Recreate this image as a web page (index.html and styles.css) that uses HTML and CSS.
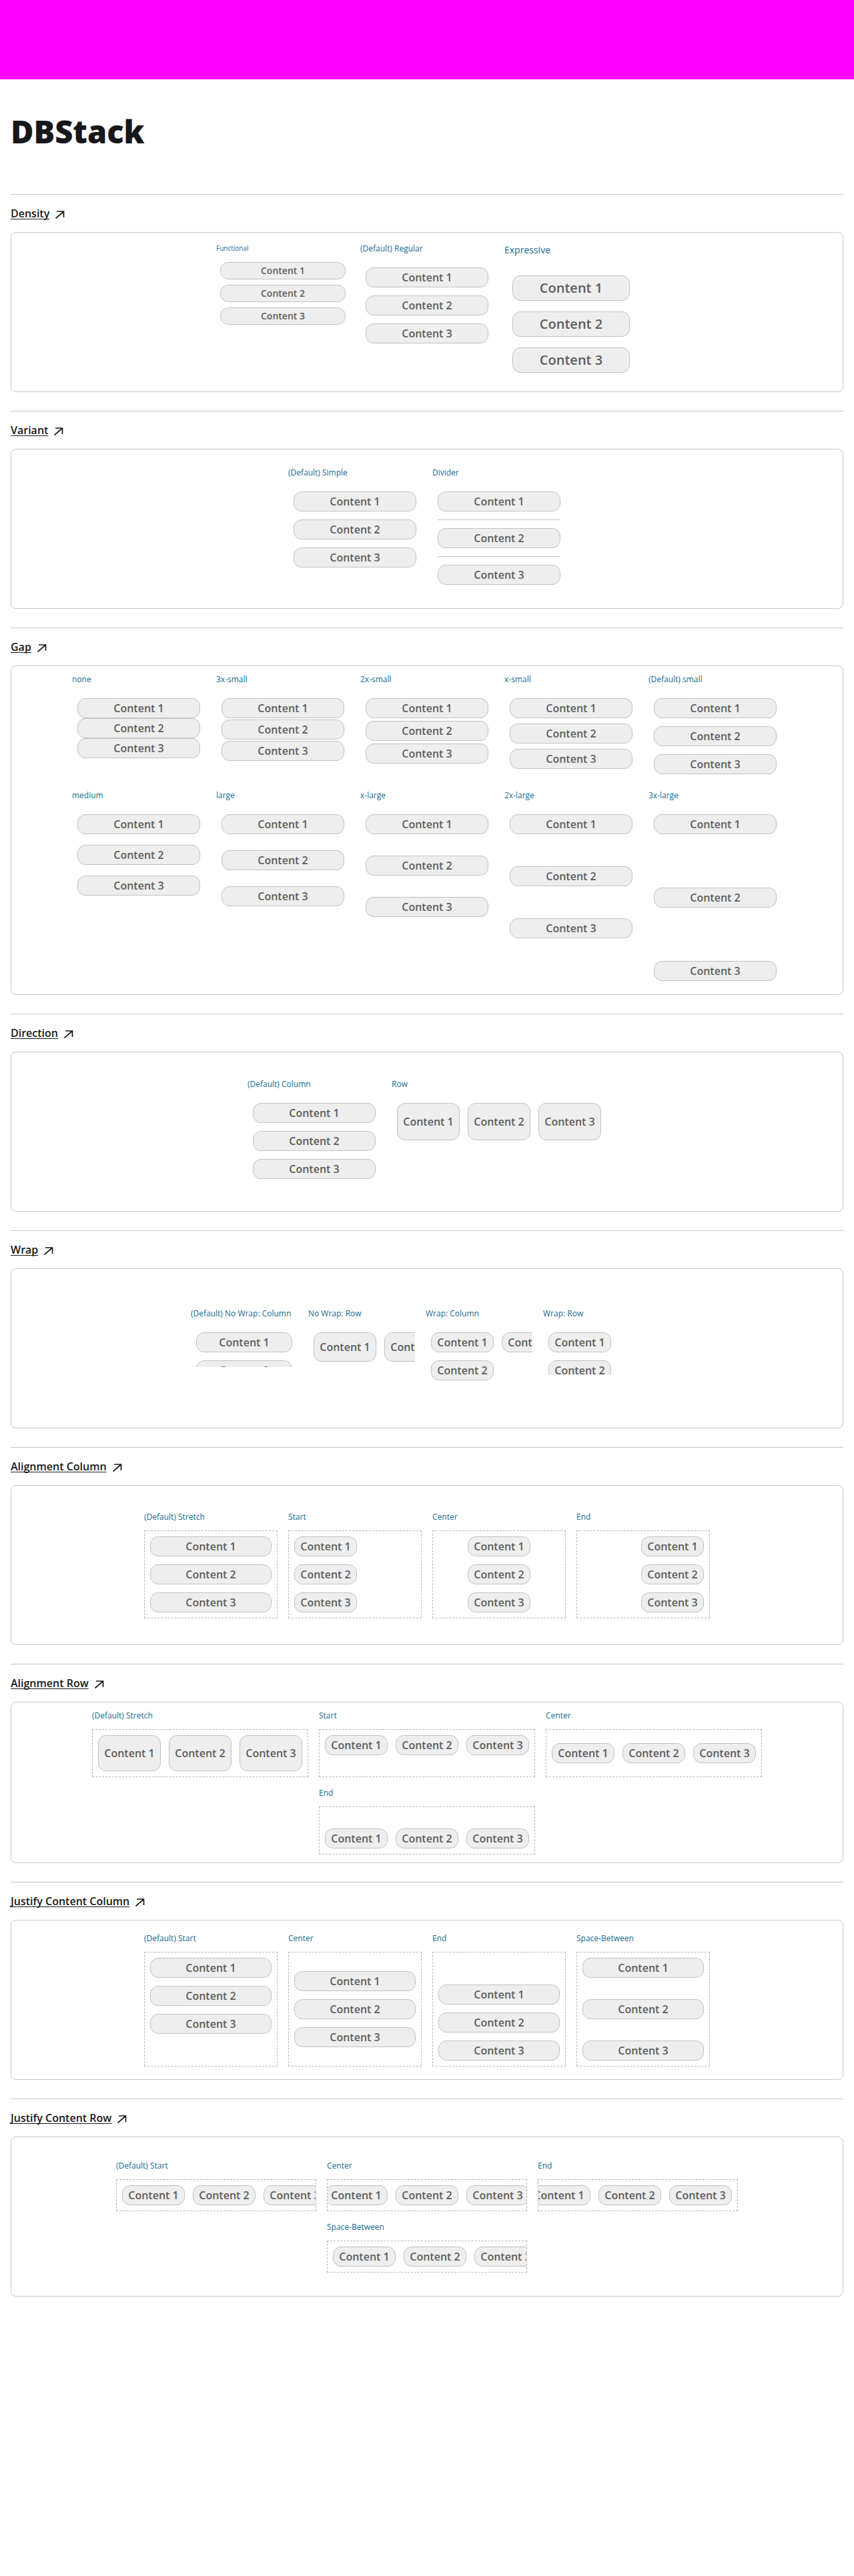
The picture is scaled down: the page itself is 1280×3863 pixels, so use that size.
FILE: index.html
```
<!DOCTYPE html>
<html lang="en">
<head>
<meta charset="utf-8">
<meta name="viewport" content="width=device-width, initial-scale=1">
<title>DBStack</title>
<link rel="stylesheet" href="styles.css">
</head>
<body>
<svg class="sprite" aria-hidden="true">
  <symbol id="arrow" viewBox="0 0 16 16">
    <path d="M3 5h10.500v9M1.500 15.500l12-10.500" fill="none" stroke="currentColor" stroke-width="1.700"/>
  </symbol>
</svg>
<div class="banner"></div>
<main class="page">
  <h1 class="title">DBStack</h1>

  <section class="section">
    <h2 class="heading"><a class="link" href="#density"><span class="link-text">Density</span><svg class="icon" aria-hidden="true"><use href="#arrow"/></svg></a></h2>
    <div class="card" id="density">
      <div class="cell functional"><span class="label">Functional</span><div class="stack"><div class="pill">Content 1</div><div class="pill">Content 2</div><div class="pill">Content 3</div></div></div>
      <div class="cell"><span class="label">(Default) Regular</span><div class="stack"><div class="pill">Content 1</div><div class="pill">Content 2</div><div class="pill">Content 3</div></div></div>
      <div class="cell expressive"><span class="label">Expressive</span><div class="stack"><div class="pill">Content 1</div><div class="pill">Content 2</div><div class="pill">Content 3</div></div></div>
    </div>
  </section>

  <section class="section">
    <h2 class="heading"><a class="link" href="#variant"><span class="link-text">Variant</span><svg class="icon" aria-hidden="true"><use href="#arrow"/></svg></a></h2>
    <div class="card" id="variant">
      <div class="cell"><span class="label">(Default) Simple</span><div class="stack"><div class="pill">Content 1</div><div class="pill">Content 2</div><div class="pill">Content 3</div></div></div>
      <div class="cell"><span class="label">Divider</span><div class="stack"><div class="pill">Content 1</div><hr class="divider"><div class="pill">Content 2</div><hr class="divider"><div class="pill">Content 3</div></div></div>
    </div>
  </section>

  <section class="section">
    <h2 class="heading"><a class="link" href="#gap"><span class="link-text">Gap</span><svg class="icon" aria-hidden="true"><use href="#arrow"/></svg></a></h2>
    <div class="card" id="gap">
      <div class="cell"><span class="label">none</span><div class="stack gap-none"><div class="pill">Content 1</div><div class="pill">Content 2</div><div class="pill">Content 3</div></div></div>
      <div class="cell"><span class="label">3x-small</span><div class="stack gap-3xs"><div class="pill">Content 1</div><div class="pill">Content 2</div><div class="pill">Content 3</div></div></div>
      <div class="cell"><span class="label">2x-small</span><div class="stack gap-2xs"><div class="pill">Content 1</div><div class="pill">Content 2</div><div class="pill">Content 3</div></div></div>
      <div class="cell"><span class="label">x-small</span><div class="stack gap-xs"><div class="pill">Content 1</div><div class="pill">Content 2</div><div class="pill">Content 3</div></div></div>
      <div class="cell"><span class="label">(Default) small</span><div class="stack"><div class="pill">Content 1</div><div class="pill">Content 2</div><div class="pill">Content 3</div></div></div>
      <div class="cell"><span class="label">medium</span><div class="stack gap-md"><div class="pill">Content 1</div><div class="pill">Content 2</div><div class="pill">Content 3</div></div></div>
      <div class="cell"><span class="label">large</span><div class="stack gap-lg"><div class="pill">Content 1</div><div class="pill">Content 2</div><div class="pill">Content 3</div></div></div>
      <div class="cell"><span class="label">x-large</span><div class="stack gap-xl"><div class="pill">Content 1</div><div class="pill">Content 2</div><div class="pill">Content 3</div></div></div>
      <div class="cell"><span class="label">2x-large</span><div class="stack gap-2xl"><div class="pill">Content 1</div><div class="pill">Content 2</div><div class="pill">Content 3</div></div></div>
      <div class="cell"><span class="label">3x-large</span><div class="stack gap-3xl"><div class="pill">Content 1</div><div class="pill">Content 2</div><div class="pill">Content 3</div></div></div>
    </div>
  </section>

  <section class="section">
    <h2 class="heading"><a class="link" href="#direction"><span class="link-text">Direction</span><svg class="icon" aria-hidden="true"><use href="#arrow"/></svg></a></h2>
    <div class="card" id="direction">
      <div class="cell"><span class="label">(Default) Column</span><div class="stack"><div class="pill">Content 1</div><div class="pill">Content 2</div><div class="pill">Content 3</div></div></div>
      <div class="cell cell-auto"><span class="label">Row</span><div class="stack row tall"><div class="pill">Content 1</div><div class="pill">Content 2</div><div class="pill">Content 3</div></div></div>
    </div>
  </section>

  <section class="section">
    <h2 class="heading"><a class="link" href="#wrap"><span class="link-text">Wrap</span><svg class="icon" aria-hidden="true"><use href="#arrow"/></svg></a></h2>
    <div class="card" id="wrap">
      <div class="cell cell-narrow"><span class="label">(Default) No Wrap: Column</span><div class="stack clip clip-low"><div class="pill">Content 1</div><div class="pill">Content 2</div><div class="pill">Content 3</div></div></div>
      <div class="cell cell-narrow"><span class="label">No Wrap: Row</span><div class="stack row clip clip-low"><div class="pill">Content 1</div><div class="pill">Content 2</div><div class="pill">Content 3</div></div></div>
      <div class="cell cell-narrow"><span class="label">Wrap: Column</span><div class="stack wrap clip clip-high"><div class="pill">Content 1</div><div class="pill">Content 2</div><div class="pill">Content 3</div></div></div>
      <div class="cell cell-medium"><span class="label">Wrap: Row</span><div class="stack row wrap clip clip-mid"><div class="pill">Content 1</div><div class="pill">Content 2</div><div class="pill">Content 3</div></div></div>
    </div>
  </section>

  <section class="section">
    <h2 class="heading"><a class="link" href="#alignment-column"><span class="link-text">Alignment Column</span><svg class="icon" aria-hidden="true"><use href="#arrow"/></svg></a></h2>
    <div class="card" id="alignment-column">
      <div class="cell"><span class="label">(Default) Stretch</span><div class="stack outlined"><div class="pill">Content 1</div><div class="pill">Content 2</div><div class="pill">Content 3</div></div></div>
      <div class="cell"><span class="label">Start</span><div class="stack outlined align-start"><div class="pill">Content 1</div><div class="pill">Content 2</div><div class="pill">Content 3</div></div></div>
      <div class="cell"><span class="label">Center</span><div class="stack outlined align-center"><div class="pill">Content 1</div><div class="pill">Content 2</div><div class="pill">Content 3</div></div></div>
      <div class="cell"><span class="label">End</span><div class="stack outlined align-end"><div class="pill">Content 1</div><div class="pill">Content 2</div><div class="pill">Content 3</div></div></div>
    </div>
  </section>

  <section class="section">
    <h2 class="heading"><a class="link" href="#alignment-row"><span class="link-text">Alignment Row</span><svg class="icon" aria-hidden="true"><use href="#arrow"/></svg></a></h2>
    <div class="card" id="alignment-row">
      <div class="cell cell-auto"><span class="label">(Default) Stretch</span><div class="stack row outlined tall"><div class="pill">Content 1</div><div class="pill">Content 2</div><div class="pill">Content 3</div></div></div>
      <div class="cell cell-auto"><span class="label">Start</span><div class="stack row outlined tall align-start"><div class="pill">Content 1</div><div class="pill">Content 2</div><div class="pill">Content 3</div></div></div>
      <div class="cell cell-auto"><span class="label">Center</span><div class="stack row outlined tall align-center"><div class="pill">Content 1</div><div class="pill">Content 2</div><div class="pill">Content 3</div></div></div>
      <div class="cell cell-auto"><span class="label">End</span><div class="stack row outlined tall align-end"><div class="pill">Content 1</div><div class="pill">Content 2</div><div class="pill">Content 3</div></div></div>
    </div>
  </section>

  <section class="section">
    <h2 class="heading"><a class="link" href="#justify-column"><span class="link-text">Justify Content Column</span><svg class="icon" aria-hidden="true"><use href="#arrow"/></svg></a></h2>
    <div class="card" id="justify-column">
      <div class="cell"><span class="label">(Default) Start</span><div class="stack outlined roomy"><div class="pill">Content 1</div><div class="pill">Content 2</div><div class="pill">Content 3</div></div></div>
      <div class="cell"><span class="label">Center</span><div class="stack outlined roomy justify-center"><div class="pill">Content 1</div><div class="pill">Content 2</div><div class="pill">Content 3</div></div></div>
      <div class="cell"><span class="label">End</span><div class="stack outlined roomy justify-end"><div class="pill">Content 1</div><div class="pill">Content 2</div><div class="pill">Content 3</div></div></div>
      <div class="cell"><span class="label">Space-Between</span><div class="stack outlined roomy justify-between"><div class="pill">Content 1</div><div class="pill">Content 2</div><div class="pill">Content 3</div></div></div>
    </div>
  </section>

  <section class="section">
    <h2 class="heading"><a class="link" href="#justify-row"><span class="link-text">Justify Content Row</span><svg class="icon" aria-hidden="true"><use href="#arrow"/></svg></a></h2>
    <div class="card" id="justify-row">
      <div class="cell cell-wide"><span class="label">(Default) Start</span><div class="stack row outlined clip"><div class="pill">Content 1</div><div class="pill">Content 2</div><div class="pill">Content 3</div></div></div>
      <div class="cell cell-wide"><span class="label">Center</span><div class="stack row outlined clip justify-center"><div class="pill">Content 1</div><div class="pill">Content 2</div><div class="pill">Content 3</div></div></div>
      <div class="cell cell-wide"><span class="label">End</span><div class="stack row outlined clip justify-end"><div class="pill">Content 1</div><div class="pill">Content 2</div><div class="pill">Content 3</div></div></div>
      <div class="cell cell-wide"><span class="label">Space-Between</span><div class="stack row outlined clip justify-between"><div class="pill">Content 1</div><div class="pill">Content 2</div><div class="pill">Content 3</div></div></div>
    </div>
  </section>
</main>
</body>
</html>
```
FILE: styles.css
```
* { box-sizing: border-box; }

body {
  margin: 0;
  background: #fff;
  color: #16181b;
  font-family: "Open Sans", "Noto Sans", sans-serif;
  font-size: 16px;
  line-height: 24px;
}

.sprite { display: none; }

.banner { height: 119px; background: #f0f; }

.page { padding: 48px 16px 64px; }

.title {
  margin: 0 0 64px;
  font-size: 47px;
  font-weight: 800;
  line-height: 60px;
}

.section {
  border-top: 1px solid #c3c4c6;
  padding-bottom: 28px;
}

.heading {
  margin: 0;
  padding: 16px 0;
  font-size: 16px;
  font-weight: 600;
  line-height: 24px;
}

.link {
  display: inline-flex;
  gap: 8px;
  color: inherit;
  text-decoration: none;
  vertical-align: top;
}

.link-text {
  text-decoration: underline;
  text-decoration-thickness: 1px;
  text-decoration-skip-ink: none;
  text-underline-offset: 2px;
}

.icon { width: 16px; height: 16px; margin-top: 4px; }

.card {
  display: flex;
  flex-wrap: wrap;
  justify-content: center;
  align-items: flex-start;
  align-content: center;
  gap: 16px;
  min-height: 240px;
  padding: 12px;
  border: 1px solid #c3c4c6;
  border-radius: 8px;
}

.cell {
  display: flex;
  flex-direction: column;
  gap: 12px;
  width: 200px;
}

.cell-auto { width: auto; }
.cell-narrow { width: 160px; }
.cell-medium { width: 180px; }
.cell-wide { width: 300px; }

.label {
  color: #156b91;
  font-size: 12px;
  line-height: 16px;
  white-space: nowrap;
}

.stack {
  display: flex;
  flex-direction: column;
  gap: 12px;
  padding: 8px;
}

.row { flex-direction: row; }
.wrap { flex-wrap: wrap; align-content: flex-start; }
.outlined { border: 1px dashed #b4b5b7; }
.tall { height: 72px; }
.roomy { height: 172px; }

.clip { overflow: hidden; }
.clip-low { height: 60px; }
.clip-mid { height: 72px; }
.clip-high { height: 92px; }

.gap-none { gap: 0; }
.gap-3xs { gap: 2px; }
.gap-2xs { gap: 4px; }
.gap-xs { gap: 8px; }
.gap-md { gap: 16px; }
.gap-lg { gap: 24px; }
.gap-xl { gap: 32px; }
.gap-2xl { gap: 48px; }
.gap-3xl { gap: 80px; }

.align-start { align-items: flex-start; }
.align-center { align-items: center; }
.align-end { align-items: flex-end; }

.justify-center { justify-content: center; }
.justify-end { justify-content: flex-end; }
.justify-between { justify-content: space-between; }

.pill {
  display: flex;
  flex-shrink: 0;
  align-items: center;
  justify-content: center;
  min-width: 94px;
  padding: 4px 8px;
  border: 1px solid #c0c1c3;
  border-radius: 12px;
  background: #eee;
  color: #5c5c5c;
  font-weight: 600;
  line-height: 20px;
  white-space: nowrap;
}

.divider {
  width: 100%;
  margin: 0;
  border: 0;
  border-top: 1px solid #c0c1c3;
}

.functional { gap: 8px; }
.functional .label { font-size: 10px; line-height: 14px; }
.functional .stack { gap: 8px; padding: 6px; }
.functional .pill { padding: 2px 6px; font-size: 14px; }

.expressive { gap: 16px; }
.expressive .label { font-size: 14px; line-height: 20px; }
.expressive .stack { gap: 16px; padding: 12px; }
.expressive .pill { font-size: 20px; line-height: 28px; }
```
